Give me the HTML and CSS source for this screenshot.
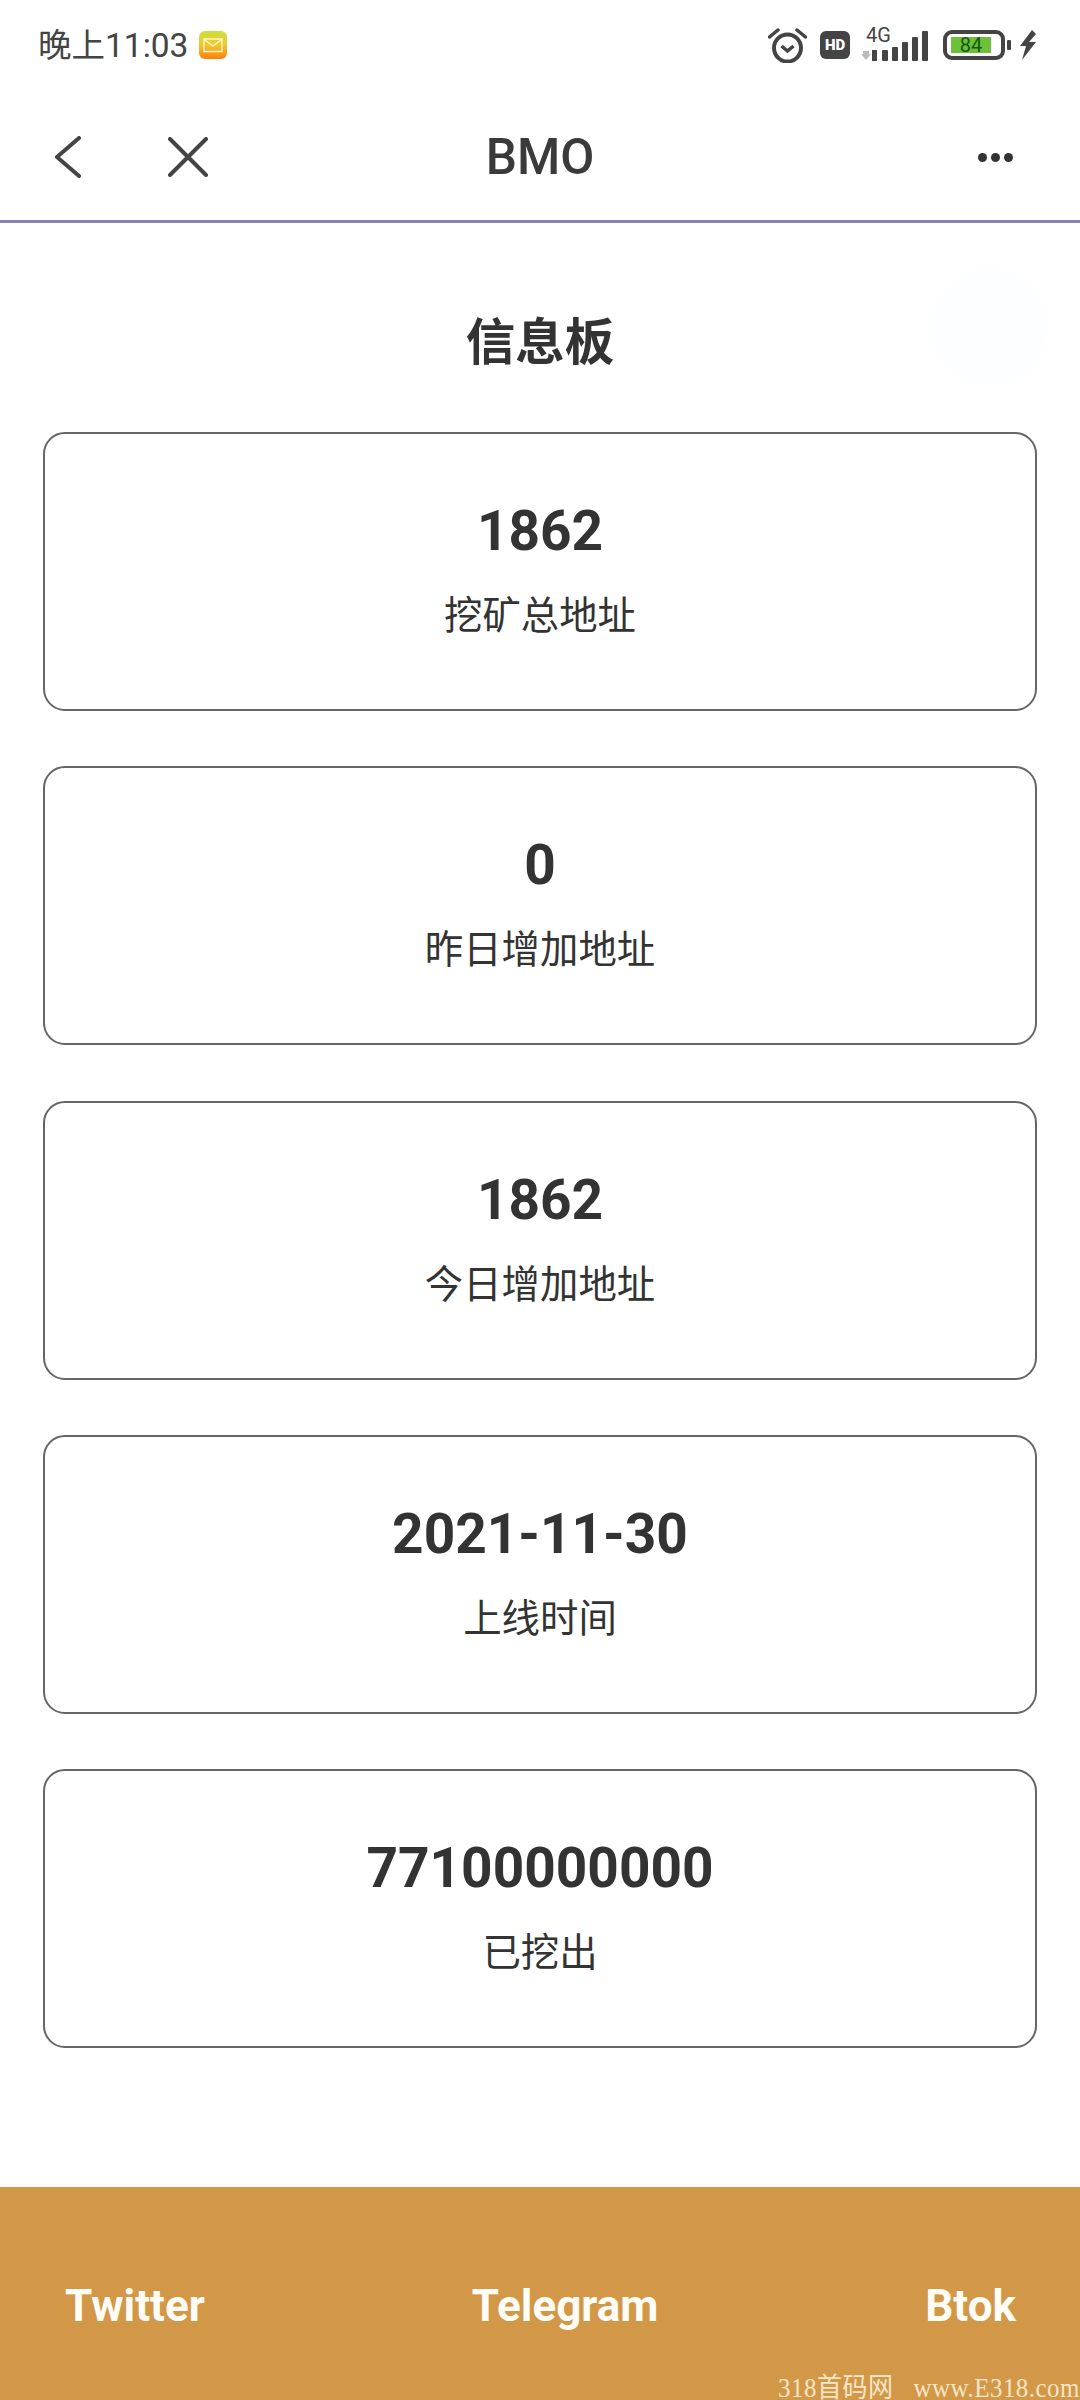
FILE: index.html
```html
<!DOCTYPE html>
<html lang="zh-CN">

<head>
    <meta charset="UTF-8">
    <meta name="viewport" content="width=device-width, initial-scale=1.0">
    <title>BMO</title>
    <link rel="stylesheet" href="styles.css">
</head>

<body>
    <div id="statusBar">
        <div class="statusLeft">
            <span class="time">晚上11:03</span>
            <svg class="mailIcon" width="28" height="28" viewBox="0 0 28 28">
                <defs>
                    <linearGradient id="mailGrad" x1="0" y1="0" x2="0" y2="1">
                        <stop offset="0" stop-color="#c9e03c"/>
                        <stop offset="0.5" stop-color="#f3c72c"/>
                        <stop offset="1" stop-color="#fb7f0c"/>
                    </linearGradient>
                </defs>
                <rect width="28" height="28" rx="6" fill="url(#mailGrad)"/>
                <rect x="5" y="8" width="18" height="12.5" fill="none" stroke="#fdf6c8" stroke-width="1.5"/>
                <path d="M5.500 8.500 L14 15 L22.500 8.500" fill="none" stroke="#fdf6c8" stroke-width="1.5"/>
            </svg>
        </div>
        <div class="statusRight">
            <svg class="alarmIcon" width="39" height="35" viewBox="0 0 39 35">
                <circle cx="19.5" cy="20" r="13.5" fill="none" stroke="#444" stroke-width="4"/>
                <path d="M13.500 18 L19.500 23 L25.500 18" fill="none" stroke="#444" stroke-width="3.5"/>
                <path d="M1.500 9 L10 2 M37.500 9 L29 2" fill="none" stroke="#444" stroke-width="3.5" stroke-linecap="round"/>
            </svg>
            <div class="hdBadge">HD</div>
            <div class="signal">
                <span class="netLabel">4G</span>
                <svg width="66" height="30" viewBox="0 0 66 30">
                    <path d="M1 20 h6 v3 h2 l-5 6 l-5 -6 h2z" fill="#bbb"/>
                    <rect x="10" y="19" width="5" height="11" fill="#444"/>
                    <rect x="20" y="19" width="6" height="11" rx="1" fill="#444"/>
                    <rect x="30" y="16" width="6" height="14" rx="1" fill="#444"/>
                    <rect x="40" y="11" width="6" height="19" rx="1" fill="#444"/>
                    <rect x="50" y="6" width="6" height="24" rx="1" fill="#444"/>
                    <rect x="60" y="0" width="6" height="30" rx="1" fill="#444"/>
                </svg>
            </div>
            <div class="battery">
                <div class="batteryBody">
                    <div class="batteryLevel">84</div>
                </div>
                <div class="batteryNub"></div>
            </div>
            <svg class="boltIcon" width="18" height="30" viewBox="0 0 18 30">
                <path d="M13 0 L1 16 L7 16 L3 30 L17 12 L10 12 L17 4 Z" fill="#444"/>
            </svg>
        </div>
    </div>

    <div id="navBar">
        <div class="navLeft">
            <svg width="26" height="42" viewBox="0 0 26 42">
                <path d="M24 2 L2 21 L24 40" fill="none" stroke="#444" stroke-width="4" stroke-linecap="round" stroke-linejoin="round"/>
            </svg>
            <svg width="40" height="40" viewBox="0 0 40 40">
                <path d="M2 2 L38 38 M38 2 L2 38" fill="none" stroke="#444" stroke-width="4" stroke-linecap="round"/>
            </svg>
        </div>
        <div class="navTitle">BMO</div>
        <div class="navRight">
            <span class="dot"></span>
            <span class="dot"></span>
            <span class="dot"></span>
        </div>
    </div>

    <div id="content">
        <div class="floatBall"></div>
        <h1>信息板</h1>
        <div class="card">
            <div class="cardValue">1862</div>
            <div class="cardLabel">挖矿总地址</div>
        </div>
        <div class="card">
            <div class="cardValue">0</div>
            <div class="cardLabel">昨日增加地址</div>
        </div>
        <div class="card">
            <div class="cardValue">1862</div>
            <div class="cardLabel">今日增加地址</div>
        </div>
        <div class="card">
            <div class="cardValue">2021-11-30</div>
            <div class="cardLabel">上线时间</div>
        </div>
        <div class="card">
            <div class="cardValue">77100000000</div>
            <div class="cardLabel">已挖出</div>
        </div>
    </div>

    <div id="footer">
        <span>Twitter</span>
        <span>Telegram</span>
        <span>Btok</span>
        <div class="watermark">318首码网   www.E318.com</div>
    </div>
</body>

</html>
```

FILE: styles.css
```css
html, body {
    margin: 0;
    padding: 0;
}

body {
    width: 1080px;
    height: 2400px;
    display: flex;
    flex-direction: column;
    overflow: hidden;
    position: relative;
    background-color: #fff;
    color: #333;
    font-family: Roboto, "Noto Sans CJK SC", sans-serif;
}

#statusBar {
    height: 90px;
    display: flex;
    justify-content: space-between;
    align-items: center;
    padding: 0 43px 0 38px;
    box-sizing: border-box;
}

.statusLeft, .statusRight {
    display: flex;
    align-items: center;
}

.time {
    margin-bottom: 5px;
    font-size: 33.5px;
    color: #444;
}

.mailIcon {
    margin-left: 11px;
}

.alarmIcon {
    margin-right: 13px;
}

.hdBadge {
    width: 30px;
    height: 28px;
    border-radius: 6px;
    background-color: #444;
    color: #fff;
    font-size: 15px;
    font-weight: 900;
    line-height: 28px;
    text-align: center;
}

.signal {
    position: relative;
    width: 66px;
    height: 30px;
    margin: 2px 0 0 12px;
}

.signal svg {
    display: block;
}

.netLabel {
    position: absolute;
    left: 4px;
    top: -6px;
    font-size: 20px;
    line-height: 20px;
    color: #444;
}

.battery {
    display: flex;
    align-items: center;
    margin-left: 15px;
}

.batteryBody {
    width: 62px;
    height: 30px;
    box-sizing: border-box;
    border: 4px solid #444;
    border-radius: 9px;
    padding: 3px 10px 3px 4px;
}

.batteryLevel {
    height: 16px;
    background-color: #6cc03a;
    color: #145a10;
    font-size: 20px;
    line-height: 16px;
    text-align: center;
}

.batteryNub {
    width: 4px;
    height: 10px;
    margin-left: 2px;
    background-color: #444;
    border-radius: 1px;
}

.boltIcon {
    margin-left: 8px;
}

#navBar {
    height: 133px;
    display: grid;
    grid-template-columns: 1fr auto 1fr;
    align-items: center;
    padding: 4px 67px 0 67px;
    box-sizing: border-box;
    border-bottom: 3px solid #8b7fb8;
}

.navLeft {
    display: flex;
    align-items: center;
    gap: 87px;
    margin-left: -12px;
}

.navTitle {
    font-size: 49.5px;
    font-weight: 500;
    color: #3a3a3a;
}

.navRight {
    display: flex;
    justify-content: flex-end;
    gap: 4px;
}

.dot {
    width: 9px;
    height: 9px;
    border-radius: 50%;
    background-color: #333;
}

#content {
    flex: 1;
    position: relative;
    padding: 0 43px;
}

.floatBall {
    position: absolute;
    left: 932px;
    top: 46px;
    width: 116px;
    height: 116px;
    border-radius: 50%;
    background-color: #fdfeff;
}

h1 {
    position: relative;
    margin: 0;
    height: 209px;
    line-height: 241px;
    font-size: 49.5px;
    font-weight: 700;
    text-align: center;
}

.card {
    height: 279px;
    margin-bottom: 55.3px;
    box-sizing: border-box;
    border: 2px solid #666;
    border-radius: 22px;
    display: flex;
    flex-direction: column;
    align-items: center;
    padding-top: 61px;
}

.cardValue {
    font-size: 55px;
    font-weight: 700;
    line-height: 72px;
}

.cardLabel {
    margin-top: 23px;
    font-size: 38.4px;
    line-height: 52px;
}

#footer {
    height: 213px;
    flex-shrink: 0;
    position: relative;
    display: flex;
    justify-content: space-between;
    padding: 89px 64px 0 65px;
    box-sizing: border-box;
    background-color: #d29747;
    color: #fffdf5;
    font-size: 44px;
    font-weight: 700;
    line-height: 60px;
}

.watermark {
    position: absolute;
    right: 0;
    bottom: -4px;
    font-family: "Liberation Serif", "Noto Sans CJK SC", serif;
    font-size: 27px;
    font-weight: 400;
    letter-spacing: 0.5px;
    line-height: 32px;
    white-space: pre;
    color: #f6e6c6;
    transform: scaleX(0.926);
    transform-origin: right center;
}
```
